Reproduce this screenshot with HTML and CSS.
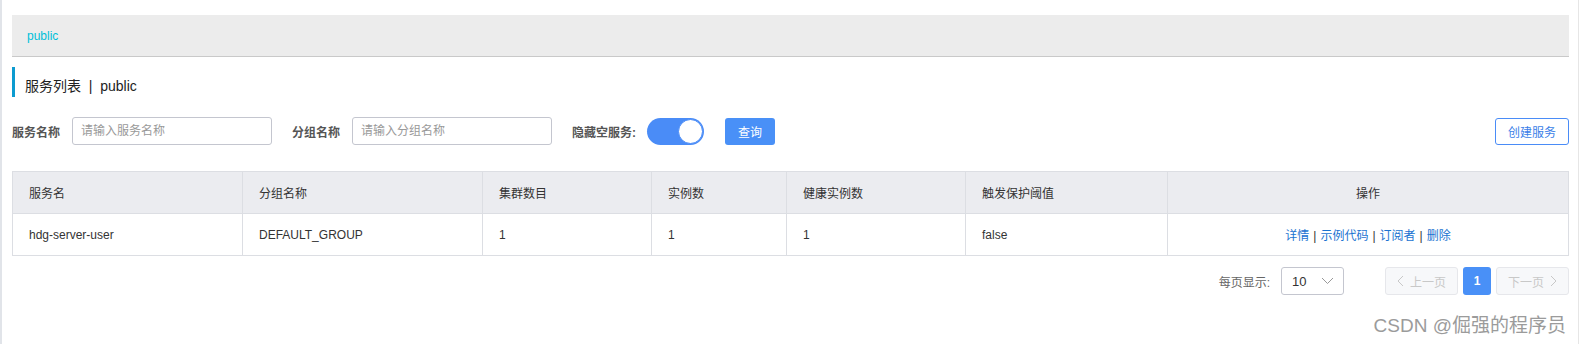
FILE: index.html
```html
<!DOCTYPE html>
<html lang="zh-CN">
	<head>
		<meta charset="utf-8">
		<title>服务列表</title>
		<link rel="stylesheet" href="styles.css">
	</head>
	<body>
		<div class="page">
			<div class="crumb">public</div>
			<h1 class="title">服务列表 &nbsp;|&nbsp; public</h1>
			<form class="search" onsubmit="return false">
				<label class="label">服务名称</label>
				<input class="field" type="text" placeholder="请输入服务名称" />
				<label class="label gap">分组名称</label>
				<input class="field" type="text" placeholder="请输入分组名称" />
				<label class="label gap">隐藏空服务:</label>
				<span class="switch"><span class="knob"></span></span>
				<button class="btn primary">查询</button>
				<button class="btn outline push">创建服务</button>
			</form>
			<table class="list">
				<colgroup>
					<col style="width:230px">
					<col style="width:240px">
					<col style="width:169px">
					<col style="width:135px">
					<col style="width:179px">
					<col style="width:202px">
					<col>
				</colgroup>
				<thead>
					<tr>
						<th>服务名</th>
						<th>分组名称</th>
						<th>集群数目</th>
						<th>实例数</th>
						<th>健康实例数</th>
						<th>触发保护阈值</th>
						<th class="center">操作</th>
					</tr>
				</thead>
				<tbody>
					<tr>
						<td>hdg-server-user</td>
						<td>DEFAULT_GROUP</td>
						<td>1</td>
						<td>1</td>
						<td>1</td>
						<td>false</td>
						<td class="center ops">
							<a href="#">详情</a><span class="sep">|</span><a href="#">示例代码</a><span class="sep">|</span><a href="#">订阅者</a><span class="sep">|</span><a href="#">删除</a>
						</td>
					</tr>
				</tbody>
			</table>
			<div class="pager">
				<span class="pager-label">每页显示:</span>
				<span class="select">10
					<svg width="13" height="8" viewBox="0 0 13 8"><polyline points="1,1 6.5,6.5 12,1" fill="none" stroke="#999" stroke-width="1"/></svg>
				</span>
				<span class="page-btn wide disabled">
					<svg width="7" height="12" viewBox="0 0 7 12"><polyline points="6,1 1,6 6,11" fill="none" stroke="#c8c8c8" stroke-width="1"/></svg>
					上一页
				</span>
				<span class="page-btn current">1</span>
				<span class="page-btn wide disabled">
					下一页
					<svg width="7" height="12" viewBox="0 0 7 12"><polyline points="1,1 6,6 1,11" fill="none" stroke="#c8c8c8" stroke-width="1"/></svg>
				</span>
			</div>
			<div class="mark">CSDN @倔强的程序员</div>
		</div>
	</body>
</html>
```

FILE: styles.css
```css
* {
	box-sizing: border-box;
}
html,
body {
	margin: 0;
	padding: 0;
	background: #fff;
	color: #333;
	font-family: "Liberation Sans", "Noto Sans CJK SC", sans-serif;
	font-size: 12px;
}
.page {
	border-left: 2px solid #e1e4e9;
	border-right: 1px solid #e6e6e6;
	margin-right: 2px;
	height: 344px;
	padding: 15px 9px 0 10px;
}
.crumb {
	height: 42px;
	padding: 3px 0 0 15px;
	line-height: 37px;
	background: #ececec;
	border-bottom: 1px solid #c9c9c9;
	color: #00bfd8;
	font-size: 12px;
}
.title {
	margin: 10px 0 0;
	height: 30px;
	padding: 9px 0 0 10px;
	line-height: 20px;
	font-size: 14px;
	font-weight: normal;
	color: #222;
	border-left: 3px solid #0c9bd0;
}
.search {
	display: flex;
	align-items: center;
	margin-top: 20px;
	height: 28px;
}
.label {
	font-weight: bold;
	color: #555;
	margin-right: 12px;
}
.label.gap {
	margin-left: 20px;
}
.field {
	width: 200px;
	height: 28px;
	border: 1px solid #c4c6cf;
	border-radius: 3px;
	padding: 0 8px;
	font-family: inherit;
	font-size: 12px;
	color: #333;
	outline: none;
}
.field::placeholder {
	color: #999;
}
.switch {
	display: flex;
	justify-content: flex-end;
	align-items: center;
	width: 57px;
	height: 27px;
	border-radius: 14px;
	background: #4a8cf7;
	padding: 1px;
	margin-left: -1px;
}
.knob {
	width: 25px;
	height: 25px;
	border-radius: 50%;
	background: #fff;
	border: 1px solid #4a8cf7;
}
.btn {
	height: 27px;
	border-radius: 3px;
	font-family: inherit;
	font-size: 12px;
	cursor: pointer;
	padding: 0;
}
.btn.primary {
	margin-left: 21px;
	width: 50px;
	border: none;
	background: #4990f7;
	color: #fff;
}
.btn.outline {
	width: 74px;
	background: #fff;
	border: 1px solid #4a8cf7;
	color: #3b7fe8;
}
.push {
	margin-left: auto;
}
.list {
	margin-top: 26px;
	width: 100%;
	table-layout: fixed;
	border-collapse: collapse;
}
.list th,
.list td {
	border: 1px solid #dcdee3;
	height: 42px;
	padding: 0 16px;
	text-align: left;
	font-weight: normal;
	color: #333;
}
.list th {
	background: #ebecf0;
}
.list .center {
	text-align: center;
}
.ops a {
	color: #1a73d1;
	text-decoration: none;
}
.ops .sep {
	margin: 0 4px;
	color: #333;
}
.pager {
	display: flex;
	justify-content: flex-end;
	align-items: center;
	margin-top: 11px;
	height: 28px;
}
.pager-label {
	color: #666;
	margin-right: 11px;
}
.select {
	display: flex;
	align-items: center;
	justify-content: space-between;
	width: 63px;
	height: 28px;
	border: 1px solid #c4c6cf;
	border-radius: 3px;
	padding: 0 9px 0 10px;
	font-size: 13px;
	color: #333;
	margin-right: 36px;
}
.page-btn {
	display: flex;
	align-items: center;
	justify-content: center;
	height: 28px;
	border-radius: 3px;
	margin-left: 5px;
	font-size: 12px;
}
.page-btn.wide {
	width: 73px;
	gap: 6px;
}
.page-btn.disabled {
	background: #f7f8fa;
	border: 1px solid #e6e7eb;
	color: #c8c8c8;
}
.page-btn.current {
	width: 28px;
	background: #4990f7;
	color: #fff;
	font-weight: bold;
}
.mark {
	margin-top: 20px;
	text-align: right;
	padding-right: 3px;
	font-size: 19px;
	line-height: 22px;
	color: #9b9b9b;
}
```
